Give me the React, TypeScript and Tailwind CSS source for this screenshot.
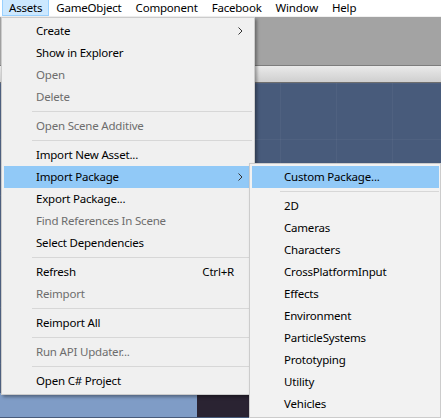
import React from 'react'

type Entry =
  | { kind: 'item'; label: string; disabled?: boolean; shortcut?: string; submenu?: boolean; active?: boolean }
  | { kind: 'sep' }

const ASSETS_MENU: Entry[] = [
  { kind: 'item', label: 'Create', submenu: true },
  { kind: 'item', label: 'Show in Explorer' },
  { kind: 'item', label: 'Open', disabled: true },
  { kind: 'item', label: 'Delete', disabled: true },
  { kind: 'sep' },
  { kind: 'item', label: 'Open Scene Additive', disabled: true },
  { kind: 'sep' },
  { kind: 'item', label: 'Import New Asset...' },
  { kind: 'item', label: 'Import Package', submenu: true, active: true },
  { kind: 'item', label: 'Export Package...' },
  { kind: 'item', label: 'Find References In Scene', disabled: true },
  { kind: 'item', label: 'Select Dependencies' },
  { kind: 'sep' },
  { kind: 'item', label: 'Refresh', shortcut: 'Ctrl+R' },
  { kind: 'item', label: 'Reimport', disabled: true },
  { kind: 'sep' },
  { kind: 'item', label: 'Reimport All' },
  { kind: 'sep' },
  { kind: 'item', label: 'Run API Updater...', disabled: true },
  { kind: 'sep' },
  { kind: 'item', label: 'Open C# Project' },
]

const PACKAGE_MENU: Entry[] = [
  { kind: 'item', label: 'Custom Package...', active: true },
  { kind: 'sep' },
  ...['2D', 'Cameras', 'Characters', 'CrossPlatformInput', 'Effects', 'Environment', 'ParticleSystems', 'Prototyping', 'Utility', 'Vehicles'].map(
    (label): Entry => ({ kind: 'item', label }),
  ),
]

const MENUBAR = ['Assets', 'GameObject', 'Component', 'Facebook', 'Window', 'Help']

function Chevron() {
  return (
    <svg width="5" height="8" viewBox="0 0 5 8" className="shrink-0">
      <path d="M0.5 0.5 L4 4 L0.5 7.5" fill="none" stroke="#333" strokeWidth="1" />
    </svg>
  )
}

function MenuList({ entries }: { entries: Entry[] }) {
  return (
    <>
      {entries.map((e, i) =>
        e.kind === 'sep' ? (
          <div key={i} className="h-[7px] flex items-center pl-[28px]">
            <div className="h-px w-full bg-[#d7d7d7]" />
          </div>
        ) : (
          <div
            key={i}
            className={`h-[22px] flex items-center pl-[32px] pr-[9px] ${e.active ? 'bg-[#91c9f7]' : ''} ${
              e.disabled ? 'text-[#6d6d6d]' : 'text-black'
            }`}
          >
            <span className="flex-1 whitespace-nowrap">{e.label}</span>
            {e.shortcut && <span className="mr-[9px]">{e.shortcut}</span>}
            {e.submenu && <Chevron />}
          </div>
        ),
      )}
    </>
  )
}

export default function App() {
  return (
    <div className="relative w-[441px] h-[418px] overflow-hidden text-[11.5px] tracking-[-0.2px] font-['Noto_Sans',sans-serif] bg-[#485b7b]">
      {/* menubar */}
      <div className="h-[17px] bg-white border-b border-[#f0f0f0] flex items-stretch pl-[2px]">
        {MENUBAR.map((m, i) => (
          <div
            key={m}
            className={`px-[6px] flex items-center leading-none ${i === 0 ? 'bg-[#cce8ff] border border-[#99d1ff] border-t-0' : 'border border-transparent'}`}
          >
            {m}
          </div>
        ))}
      </div>

      {/* editor chrome behind the menu */}
      <div className="h-[49px] bg-[#a3a3a3] border-b border-[#7d7d7d]" />
      <div className="h-[17px] bg-gradient-to-b from-[#eaeaea] to-[#cfcfcf] border-b border-[#6e6e6e]" />
      <div className="h-[310px] bg-[#485b7b] bg-[linear-gradient(to_right,rgba(255,255,255,0.04)_1px,transparent_1px),linear-gradient(to_bottom,rgba(255,255,255,0.04)_1px,transparent_1px)] bg-[size:56px_56px]" />
      <div className="flex h-[24px]">
        <div className="w-[197px] bg-[#7f9cc6]" />
        <div className="w-[52px] bg-[#2a2332]" />
        <div className="flex-1 bg-[#485b7b]" />
      </div>

      {/* Assets menu */}
      <div className="absolute left-[1px] top-[17px] w-[254px] p-[2px] bg-[#f0f0f0] border border-[#cccccc] shadow-[2px_2px_3px_rgba(0,0,0,0.35)]">
        <MenuList entries={ASSETS_MENU} />
      </div>

      {/* Import Package submenu */}
      <div className="absolute left-[249px] top-[163px] w-[192px] p-[2px] pr-[1px] bg-[#f2f2f2] border border-[#cccccc] shadow-[2px_2px_3px_rgba(0,0,0,0.35)]">
        <MenuList entries={PACKAGE_MENU} />
      </div>
    </div>
  )
}
